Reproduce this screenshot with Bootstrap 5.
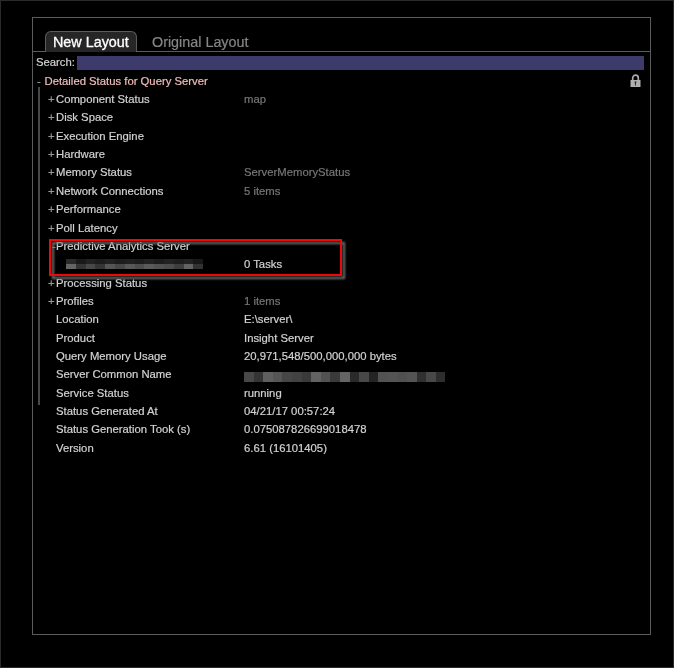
<!DOCTYPE html>
<html lang="en">
<head>
<meta charset="utf-8">
<title>Detailed Status for Query Server</title>
<link href="https://cdn.jsdelivr.net/npm/bootstrap@5.3.0/dist/css/bootstrap.min.css" rel="stylesheet">
<style>
body{background:#000;color:#d2d2d2;font-family:"Liberation Sans",Arial,sans-serif;font-size:11.3px;line-height:18.36px;height:668px;overflow:hidden}
.frame{height:668px;border:1px solid #2b2b2b;padding:16px 23px 0 31px;will-change:transform;-webkit-text-stroke:.2px currentColor}
.window{height:618px;margin-right:-1px;border:1px solid #5c5c5c}
.tabs{height:34px;padding-left:12px;border-bottom:1px solid #5c5c5c;font-size:14.35px;line-height:20px}
.tabs .nav-link{padding:0;color:#858585;line-height:21px}
.tabs .nav-link.active{width:92px;height:21px;margin-bottom:-1px;padding-left:7px;border:1px solid #5c5c5c;border-bottom:0;border-radius:6px 6px 0 0;background:#262626;color:#fff;-webkit-text-stroke:.3px #fff}
.tabs .other{margin-left:15px;margin-bottom:-2px}
.search{height:13px;margin:4px 6px 0 3px;line-height:13px}
.search label{width:41px}
.search .field{height:14px;background:#3d3b6b}
.root{margin-top:3px;padding-left:4px;height:18px;color:#f0bcbc}
.sign{color:#999;width:7.5px}
.lock{margin:2px 9px 0 0}
.tree{position:relative;padding-left:15px}
.rail{position:absolute;left:5px;top:-3px;width:2px;height:318px;background:#484848}
.line{height:18.36px;white-space:nowrap}
.line .sign{width:8px}
.key{width:188px}
.dim{color:#777}
.marker{position:absolute;left:16px;top:149px;width:293px;height:37px;border:2px solid #f00808;filter:drop-shadow(3px 3px 1px #777)}
.mosaic i{display:block;width:9.6px;height:10px}
.mosaic.small i{height:5px;width:9.8px}
.mosaic.lower{padding-top:7px}
.redacted{padding-left:10px;padding-top:4px}
</style>
<script src="https://cdn.jsdelivr.net/npm/bootstrap@5.3.0/dist/js/bootstrap.bundle.min.js"></script>
</head>
<body>
<main class="frame">
<section class="window">
<nav class="tabs nav d-flex align-items-end flex-nowrap">
<a class="nav-link active">New Layout</a><a class="nav-link other">Original Layout</a>
</nav>
<div class="search d-flex"><label>Search:</label><div class="field flex-grow-1"></div></div>
<div class="root d-flex"><span class="sign">-</span><span class="flex-grow-1">Detailed Status for Query Server</span>
<svg class="lock" width="11" height="14" viewBox="0 0 11 14"><path d="M2.7 6V4a2.8 2.8 0 0 1 5.6 0v2" fill="none" stroke="#aaa" stroke-width="1.7"/><path d="M.5 6h10v7H.5z" fill="#b0b0b0"/><path d="M5.5 8v3.6" stroke="#333" stroke-width="1.1"/><circle cx="5.5" cy="8.3" r="1" fill="#333"/></svg>
</div>
<div class="tree">
<div class="rail"></div>
<div class="line d-flex"><span class="sign">+</span><span class="key">Component Status</span><span class="dim">map</span></div>
<div class="line d-flex"><span class="sign">+</span><span class="key">Disk Space</span></div>
<div class="line d-flex"><span class="sign">+</span><span class="key">Execution Engine</span></div>
<div class="line d-flex"><span class="sign">+</span><span class="key">Hardware</span></div>
<div class="line d-flex"><span class="sign">+</span><span class="key">Memory Status</span><span class="dim">ServerMemoryStatus</span></div>
<div class="line d-flex"><span class="sign">+</span><span class="key">Network Connections</span><span class="dim">5 items</span></div>
<div class="line d-flex"><span class="sign">+</span><span class="key">Performance</span></div>
<div class="line d-flex"><span class="sign">+</span><span class="key">Poll Latency</span></div>
<div class="line d-flex"><span class="sign ps-1">-</span><span class="key">Predictive Analytics Server</span></div>
<div class="line d-flex"><span class="sign"></span><div class="key redacted"><div class="mosaic small d-flex" id="m1"></div><div class="mosaic small d-flex" id="m2"></div></div><span>0 Tasks</span></div>
<div class="line d-flex"><span class="sign">+</span><span class="key">Processing Status</span></div>
<div class="line d-flex"><span class="sign">+</span><span class="key">Profiles</span><span class="dim">1 items</span></div>
<div class="line d-flex"><span class="sign"></span><span class="key">Location</span><span>E:\server\</span></div>
<div class="line d-flex"><span class="sign"></span><span class="key">Product</span><span>Insight Server</span></div>
<div class="line d-flex"><span class="sign"></span><span class="key">Query Memory Usage</span><span>20,971,548/500,000,000 bytes</span></div>
<div class="line d-flex"><span class="sign"></span><span class="key">Server Common Name</span><div class="mosaic lower d-flex" id="m3"></div></div>
<div class="line d-flex"><span class="sign"></span><span class="key">Service Status</span><span>running</span></div>
<div class="line d-flex"><span class="sign"></span><span class="key">Status Generated At</span><span>04/21/17 00:57:24</span></div>
<div class="line d-flex"><span class="sign"></span><span class="key">Status Generation Took (s)</span><span>0.075087826699018478</span></div>
<div class="line d-flex"><span class="sign"></span><span class="key">Version</span><span>6.61 (16101405)</span></div>
<div class="marker"></div>
</div>
</section>
</main>
<script>
// Grey levels of the redacted name blocks
const blocks={
m1:[42,25,34,28,34,28,32,28,34,28,34,30,34,24],
m2:[100,52,72,52,85,72,88,76,90,82,76,62,98,50],
m3:[72,52,95,85,70,66,58,98,82,58,100,42,72,36,82,84,80,84,48,72,46]};
for(const id in blocks)for(const v of blocks[id]){
const c=document.createElement('i');c.style.backgroundColor=`rgb(${v},${v},${v})`;document.getElementById(id).append(c);}
</script>
</body>
</html>
